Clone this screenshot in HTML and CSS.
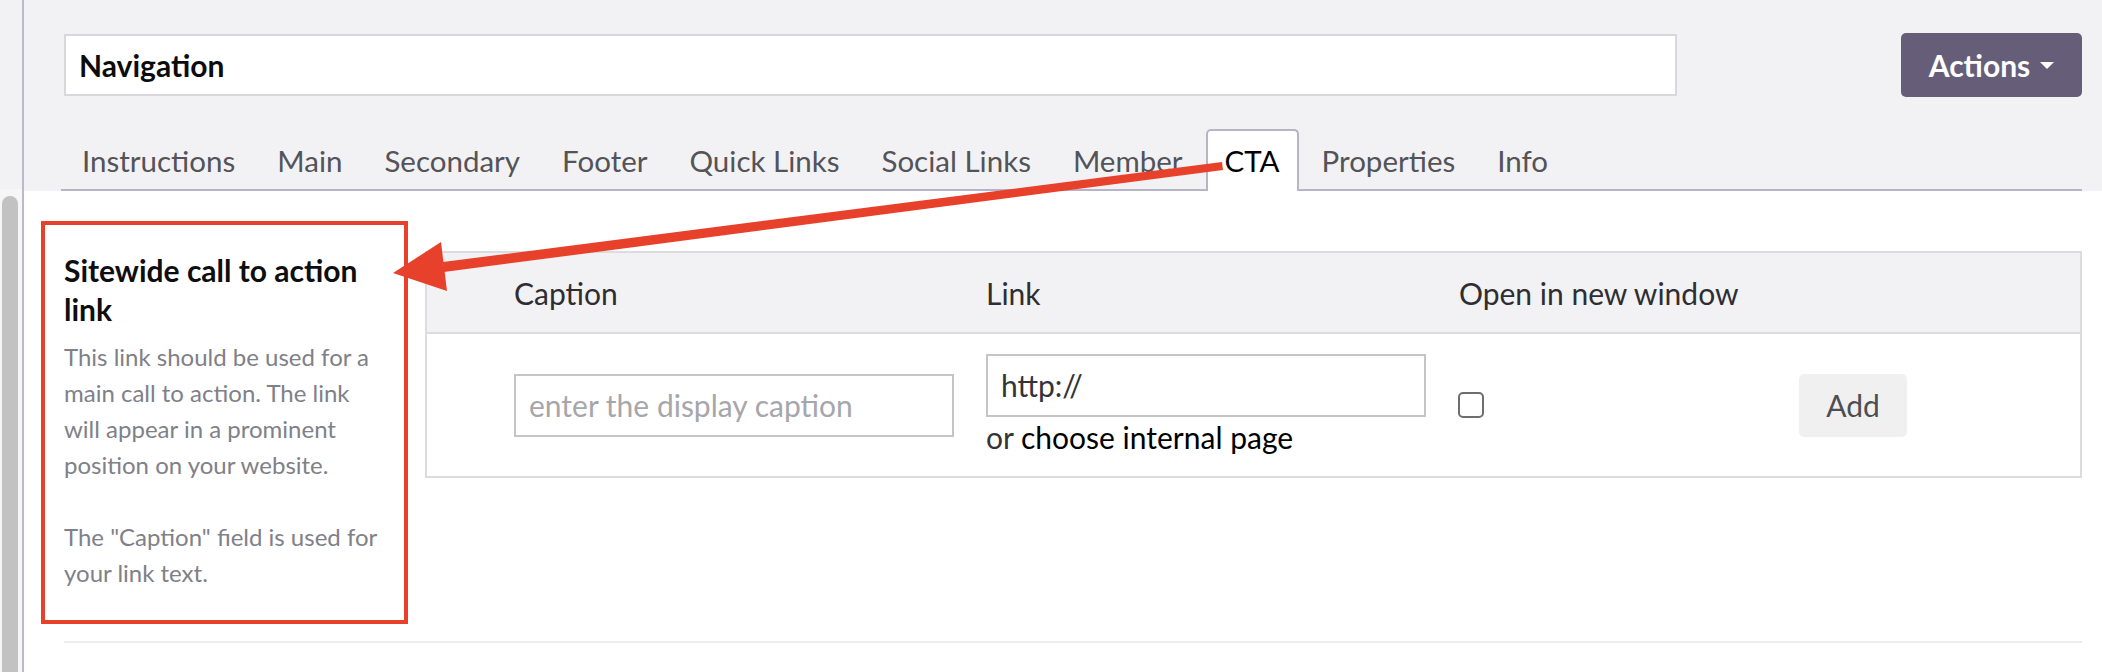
FILE: index.html
```html
<!DOCTYPE html>
<html lang="en">
<head>
<meta charset="utf-8">
<title>Navigation</title>
<link rel="stylesheet" href="styles.css">
</head>
<body>
<div class="app">
  <div class="gutter"><div class="thumb"></div></div>
  <div class="main">
    <header class="header">
      <div class="title-row">
        <div class="name-input">Navigation</div>
        <button class="actions">Actions <span class="caret"></span></button>
      </div>
      <nav class="tabs">
        <span class="tab">Instructions</span>
        <span class="tab">Main</span>
        <span class="tab">Secondary</span>
        <span class="tab">Footer</span>
        <span class="tab">Quick Links</span>
        <span class="tab">Social Links</span>
        <span class="tab">Member</span>
        <span class="tab active">CTA</span>
        <span class="tab">Properties</span>
        <span class="tab">Info</span>
      </nav>
    </header>
    <section class="content">
      <div class="prop-row">
        <div class="prop-label">
          <h3 class="label-title">Sitewide call to action link</h3>
          <p class="label-desc">This link should be used for a main call to action. The link will appear in a prominent position on your website.<br><br>The "Caption" field is used for your link text.</p>
        </div>
        <div class="link-table">
          <div class="lt-head">
            <span></span>
            <span>Caption</span>
            <span>Link</span>
            <span>Open in new window</span>
            <span></span>
          </div>
          <div class="lt-body">
            <span></span>
            <div class="cell"><div class="field placeholder">enter the display caption</div></div>
            <div class="cell link-cell">
              <div class="field">http://</div>
              <div class="choose">or <span class="choose-link">choose internal page</span></div>
            </div>
            <div class="cell"><span class="checkbox"></span></div>
            <div class="cell"><button class="add-btn">Add</button></div>
          </div>
        </div>
      </div>
      <div class="divider"></div>
    </section>
  </div>
</div>
<svg class="arrow" width="2102" height="672" viewBox="0 0 2102 672" xmlns="http://www.w3.org/2000/svg">
  <polygon points="1222,162 1223,170 444,272 443,262" fill="#e8412b"/>
  <polygon points="393,273 441,242 447,291" fill="#e8412b"/>
</svg>
</body>
</html>
```

FILE: styles.css
```css
* { box-sizing: border-box; }
html, body { margin: 0; padding: 0; }
body {
  width: 2102px;
  height: 672px;
  overflow: hidden;
  background: #ffffff;
  font-family: Lato, "Open Sans", "Liberation Sans", sans-serif;
  color: #1b1b1d;
  position: relative;
}
.app {
  display: flex;
  height: 672px;
}
.gutter {
  width: 24px;
  flex: none;
  border-right: 2px solid #bbb9cb;
  background: linear-gradient(#f2f2f4 0, #f2f2f4 189px, #f6f6f6 189px);
  padding: 196px 4px 0 2px;
}
.thumb {
  height: 100%;
  background: #c2c2c2;
  border-radius: 8px 8px 0 0;
}
.main {
  flex: 1;
  display: flex;
  flex-direction: column;
}
.header {
  background: #f2f2f4;
  padding: 33px 20px 0 40px;
}
.title-row {
  display: flex;
  align-items: center;
  justify-content: space-between;
}
.name-input {
  width: 1613px;
  height: 62px;
  background: #ffffff;
  border: 2px solid #d8d8dc;
  padding: 0 13px;
  display: flex;
  align-items: center;
  font-size: 30px;
  font-weight: 700;
  color: #0c0c0c;
}
.actions {
  width: 181px;
  height: 64px;
  border: none;
  border-radius: 5px;
  background: #665e79;
  color: #ffffff;
  font-family: inherit;
  font-size: 30px;
  font-weight: 700;
  display: flex;
  align-items: center;
  justify-content: center;
  gap: 10px;
  padding: 0;
}
.caret {
  width: 0;
  height: 0;
  border-left: 7px solid transparent;
  border-right: 7px solid transparent;
  border-top: 7px solid #ffffff;
}
.tabs {
  display: flex;
  margin-top: 32px;
  margin-left: -3px;
  border-bottom: 2px solid #b6b4c6;
}
.tab {
  font-size: 29.5px;
  line-height: 35px;
  color: #535358;
  padding: 12px 19px 11px;
  border: 2px solid transparent;
  border-bottom: none;
  margin-bottom: -2px;
  border-radius: 5px 5px 0 0;
  white-space: nowrap;
}
.tab.active {
  background: #ffffff;
  border-color: #b6b4c6;
  color: #000000;
  padding: 12px 17px 13px;
  margin: 0 2px -2px;
}
.content {
  padding: 60px 20px 0 40px;
}
.prop-row {
  display: grid;
  grid-template-columns: 344px 1fr;
  column-gap: 17px;
  align-items: start;
}
.prop-label {
  margin: -30px 0 0 -23px;
  border: 4px solid #e8412b;
  padding: 26px 19px 29px 19px;
}
.label-title {
  margin: 0;
  font-size: 30px;
  line-height: 39px;
  font-weight: 700;
  color: #0e0e10;
}
.label-desc {
  margin: 10px 0 0;
  font-size: 24px;
  line-height: 36px;
  color: #808088;
}
.link-table {
  border: 2px solid #dcdcdf;
}
.lt-head, .lt-body {
  display: grid;
  grid-template-columns: 87px 472px 473px 340px 1fr;
}
.lt-head {
  height: 81px;
  background: #f2f2f4;
  border-bottom: 2px solid #dcdcdf;
  align-items: center;
  font-size: 30px;
  color: #2e2e32;
}
.lt-body {
  height: 142px;
  align-items: center;
}
.cell { display: flex; flex-direction: column; align-items: flex-start; }
.field {
  width: 440px;
  height: 63px;
  border: 2px solid #c4c4c9;
  padding: 0 13px;
  display: flex;
  align-items: center;
  font-size: 30px;
  color: #333338;
}
.field.placeholder { color: #a6a6ab; }
.choose {
  font-size: 30px;
  line-height: 40px;
  color: #333336;
}
.choose-link { color: #000000; }
.checkbox {
  display: block;
  width: 26px;
  height: 26px;
  border: 2px solid #6e6e72;
  border-radius: 5px;
  background: #ffffff;
  margin-left: -1px;
}
.add-btn {
  width: 108px;
  height: 63px;
  border: none;
  border-radius: 5px;
  background: #f0f0f1;
  color: #4e4e52;
  font-family: inherit;
  font-size: 30px;
  padding: 0;
}
.divider {
  height: 2px;
  background: #ececee;
  margin-top: 17px;
}
.arrow {
  position: absolute;
  left: 0;
  top: 0;
  pointer-events: none;
}
```
